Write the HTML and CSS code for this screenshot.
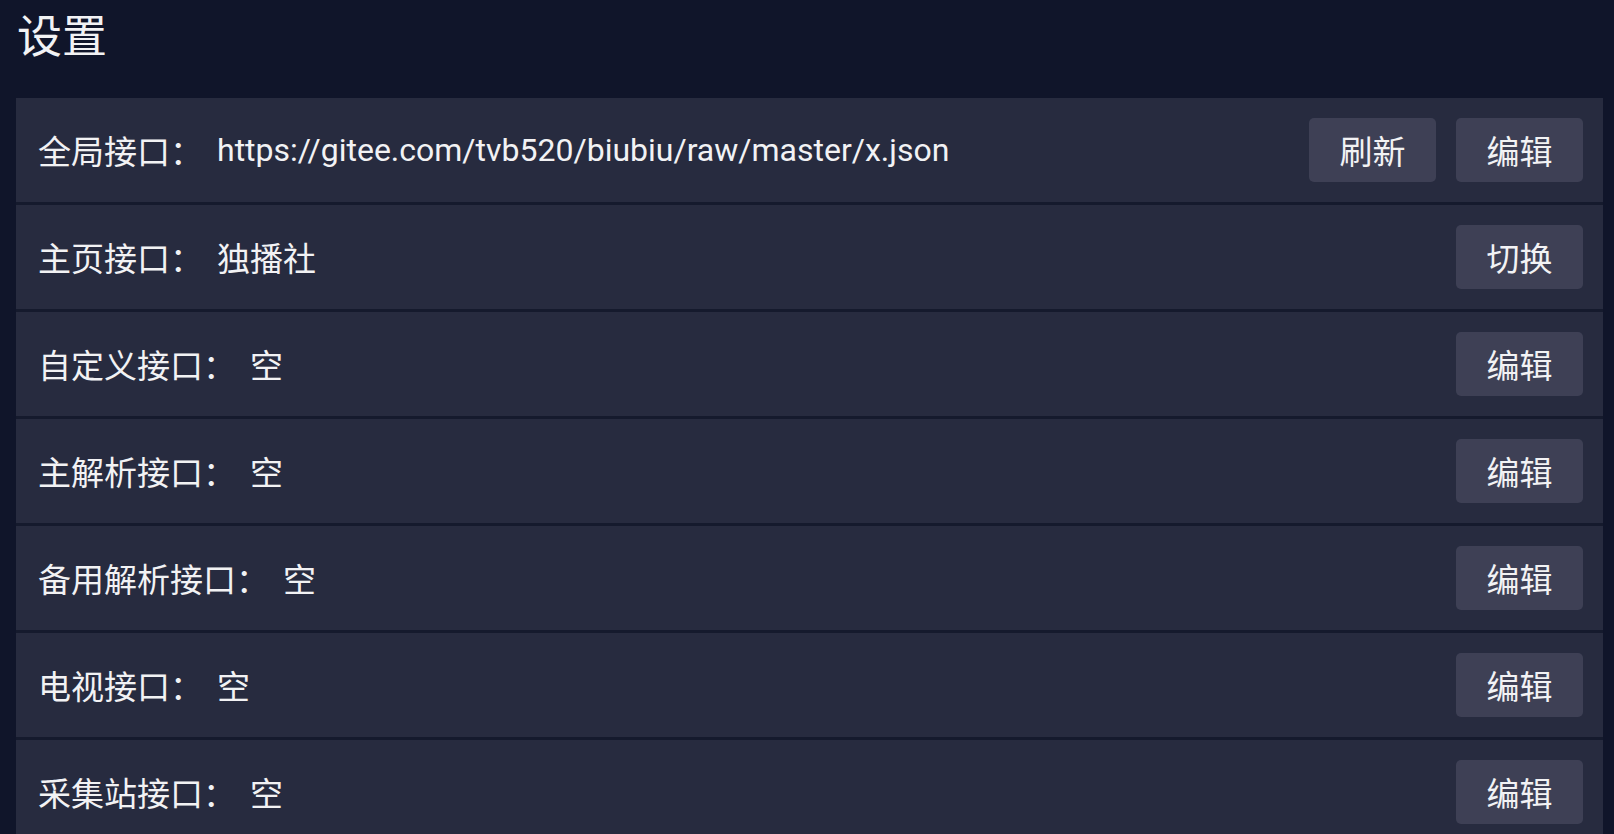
FILE: index.html
```html
<!DOCTYPE html>
<html>
    <head>
        <meta http-equiv="Content-Type" content="text/html; charset=utf-8" />
        <title>设置</title>
        <link rel="stylesheet" href="styles.css">
    </head>
    <body>
        <h1 class="page_title">设置</h1>
        <div class="settings_box">
            <div class="setting_row">
                <span class="setting_label">全局接口：</span>
                <span class="setting_value url_text">https://gitee.com/tvb520/biubiu/raw/master/x.json</span>
                <div class="setting_buttons">
                    <button type="button" class="setting_btn">刷新</button>
                    <button type="button" class="setting_btn">编辑</button>
                </div>
            </div>
            <div class="setting_row">
                <span class="setting_label">主页接口：</span>
                <span class="setting_value">独播社</span>
                <div class="setting_buttons">
                    <button type="button" class="setting_btn">切换</button>
                </div>
            </div>
            <div class="setting_row">
                <span class="setting_label">自定义接口：</span>
                <span class="setting_value">空</span>
                <div class="setting_buttons">
                    <button type="button" class="setting_btn">编辑</button>
                </div>
            </div>
            <div class="setting_row">
                <span class="setting_label">主解析接口：</span>
                <span class="setting_value">空</span>
                <div class="setting_buttons">
                    <button type="button" class="setting_btn">编辑</button>
                </div>
            </div>
            <div class="setting_row">
                <span class="setting_label">备用解析接口：</span>
                <span class="setting_value">空</span>
                <div class="setting_buttons">
                    <button type="button" class="setting_btn">编辑</button>
                </div>
            </div>
            <div class="setting_row">
                <span class="setting_label">电视接口：</span>
                <span class="setting_value">空</span>
                <div class="setting_buttons">
                    <button type="button" class="setting_btn">编辑</button>
                </div>
            </div>
            <div class="setting_row">
                <span class="setting_label">采集站接口：</span>
                <span class="setting_value">空</span>
                <div class="setting_buttons">
                    <button type="button" class="setting_btn">编辑</button>
                </div>
            </div>
        </div>
    </body>
</html>
```

FILE: styles.css
```css
html, body {
    margin: 0;
    height: 100%;
    overflow: hidden;
    background: #10152a;
    color: #f2f2f4;
    font-family: Roboto, "Noto Sans CJK SC", sans-serif;
}
.page_title {
    margin: 0;
    height: 98px;
    padding: 14px 0 0 17px;
    box-sizing: border-box;
    font-size: 45px;
    font-weight: normal;
    line-height: 48px;
}
.settings_box {
    margin: 0 11px 0 16px;
    background: #272b3f;
}
.setting_row {
    display: flex;
    align-items: center;
    height: 104px;
    padding: 0 20px 0 22px;
    border-bottom: 3px solid #151a2d;
    font-size: 33px;
}
.setting_label {
    white-space: nowrap;
}
.setting_value {
    margin-left: 14px;
    white-space: nowrap;
}
.url_text {
    font-size: 32px;
}
.setting_buttons {
    margin-left: auto;
    display: flex;
    gap: 20px;
}
.setting_btn {
    width: 127px;
    height: 64px;
    border: 0;
    border-radius: 5px;
    background: #3e4055;
    color: #f2f2f4;
    font-family: Roboto, "Noto Sans CJK SC", sans-serif;
    font-size: 33px;
    padding: 0;
}
```
